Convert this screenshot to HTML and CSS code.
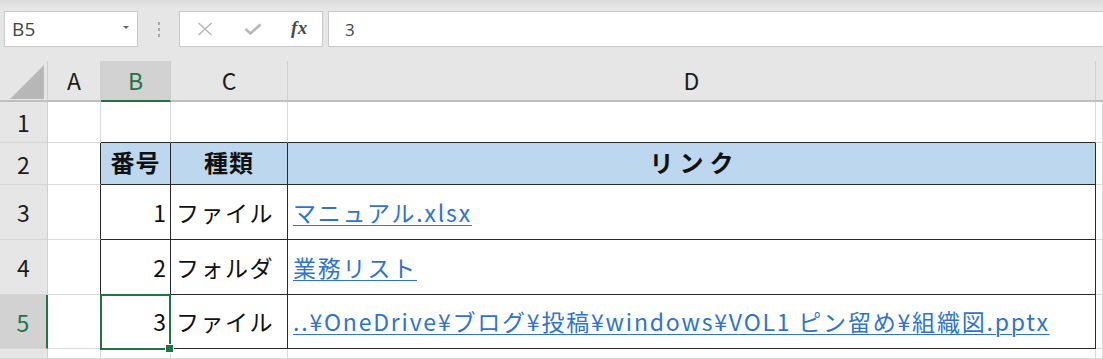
FILE: index.html
```html
<!DOCTYPE html>
<html lang="ja">
<head>
<meta charset="utf-8">
<title>Excel</title>
<link rel="stylesheet" href="styles.css">
</head>
<body>
<div class="formula-bar">
  <div class="name-box">
    <span class="name-text">B5</span>
    <span class="dropdown"></span>
  </div>
  <div class="grip"><span></span><span></span><span></span></div>
  <div class="fx-buttons">
    <svg class="icon" width="16" height="14" viewBox="0 0 16 14"><path d="M1.5 1 L14.5 13 M14.5 1 L1.5 13" stroke="#b8b8b8" stroke-width="1.6" fill="none"/></svg>
    <svg class="icon" width="18" height="12" viewBox="0 0 18 12"><path d="M1.5 6 L6.5 10.5 L16.5 1.5" stroke="#b8b8b8" stroke-width="2.6" fill="none"/></svg>
    <span class="fx">fx</span>
  </div>
  <div class="formula-input">3</div>
</div>

<div class="sheet">
  <div class="corner"><span class="tri"></span></div>
  <div class="ch">A</div>
  <div class="ch ch-sel">B</div>
  <div class="ch">C</div>
  <div class="ch">D</div>
  <div class="ch ch-last"></div>

  <div class="rh">1</div>
  <div class="c"></div>
  <div class="c tb"></div>
  <div class="c tb"></div>
  <div class="c tb"></div>
  <div class="c"></div>

  <div class="rh">2</div>
  <div class="c lb"></div>
  <div class="c t head">番号</div>
  <div class="c t head">種類</div>
  <div class="c t head head-wide">リンク</div>
  <div class="c"></div>

  <div class="rh">3</div>
  <div class="c lb"></div>
  <div class="c t num">1</div>
  <div class="c t txt">ファイル</div>
  <div class="c t txt"><a class="link" href="#">マニュアル.xlsx</a></div>
  <div class="c"></div>

  <div class="rh">4</div>
  <div class="c lb"></div>
  <div class="c t num">2</div>
  <div class="c t txt">フォルダ</div>
  <div class="c t txt"><a class="link" href="#">業務リスト</a></div>
  <div class="c"></div>

  <div class="rh rh-sel">5</div>
  <div class="c lb"></div>
  <div class="c t num active">3</div>
  <div class="c t txt">ファイル</div>
  <div class="c t txt"><a class="link" href="#">..¥OneDrive¥ブログ¥投稿¥windows¥VOL1 ピン留め¥組織図.pptx</a></div>
  <div class="c"></div>

  <div class="rh"></div>
  <div class="c"></div>
  <div class="c"></div>
  <div class="c"></div>
  <div class="c"></div>
  <div class="c"></div>
</div>
</body>
</html>
```

FILE: styles.css
```css
* { box-sizing: border-box; }

html, body {
  margin: 0;
  padding: 0;
  width: 1103px;
  height: 359px;
  overflow: hidden;
  background: #e6e6e6;
  font-family: "Noto Sans CJK JP", "Noto Sans", sans-serif;
}

/* ---------- formula bar ---------- */
.formula-bar {
  height: 61px;
  display: flex;
  align-items: flex-start;
  padding: 11px 0 0 4px;
  background: linear-gradient(#dcdcdc 0px, #e6e6e6 7px);
}

.name-box {
  width: 134px;
  height: 36px;
  background: #fff;
  border: 1px solid #c9c9c9;
  display: flex;
  align-items: center;
  justify-content: space-between;
  padding: 0 8px 0 7px;
}

.name-text {
  font-family: "Open Sans", "Noto Sans", sans-serif;
  font-size: 19px;
  color: #444;
  letter-spacing: 0.2px;
}

.dropdown {
  width: 0;
  height: 0;
  border-left: 3px solid transparent;
  border-right: 3px solid transparent;
  border-top: 3px solid #666;
  margin-bottom: 4px;
}

.grip {
  width: 41px;
  height: 36px;
  display: flex;
  flex-direction: column;
  align-items: center;
  justify-content: center;
  gap: 3px;
}

.grip span {
  width: 2px;
  height: 3px;
  background: #a8a8a8;
}

.fx-buttons {
  width: 144px;
  height: 36px;
  background: #fff;
  border: 1px solid #c9c9c9;
  display: flex;
  align-items: center;
  padding-left: 17px;
}

.fx-buttons .icon:first-child { margin-right: 31px; }
.fx-buttons .icon:nth-child(2) { margin-right: 29px; }

.fx {
  font-family: "Liberation Serif", "DejaVu Serif", serif;
  font-style: italic;
  font-weight: bold;
  font-size: 19px;
  color: #4a4a4a;
  letter-spacing: 0.5px;
  margin-top: -3px;
}

.formula-input {
  flex: 1;
  height: 36px;
  margin-left: 5px;
  margin-right: -4px;
  background: #fff;
  border: 1px solid #c9c9c9;
  display: flex;
  align-items: center;
  padding-left: 16px;
  font-family: "Open Sans", "Noto Sans", sans-serif;
  font-size: 17px;
  color: #444;
}

/* ---------- sheet grid ---------- */
.sheet {
  display: grid;
  grid-template-columns: 48px 53px 70px 117px 808px 1fr;
  grid-template-rows: 41px 41px 42px 55px 55px 54px 1fr;
  height: 298px;
  background: #fff;
}

.corner {
  background: #e6e6e6;
  border-right: 1px solid #cfcfcf;
  border-bottom: 2px solid #bfbfbf;
  display: flex;
  align-items: flex-end;
  justify-content: flex-end;
  padding: 0 3px 1px 0;
}

.tri {
  width: 0;
  height: 0;
  border-left: 34px solid transparent;
  border-bottom: 34px solid #b7b7b7;
}

.ch {
  background: #e6e6e6;
  border-right: 1px solid #cfcfcf;
  border-bottom: 2px solid #bfbfbf;
  display: flex;
  align-items: center;
  justify-content: center;
  font-size: 23px;
  color: #1c1c1c;
  padding-bottom: 1px;
}

.ch-last { border-right: none; }

.ch-sel {
  background: #d2d2d2;
  color: #217346;
  border-bottom-color: #217346;
}

.rh {
  background: #e6e6e6;
  border-right: 1px solid #cfcfcf;
  border-bottom: 1px solid #d6d6d6;
  display: flex;
  align-items: center;
  justify-content: center;
  font-size: 23px;
  color: #1c1c1c;
}

.rh-sel {
  background: #d2d2d2;
  color: #217346;
  border-right: 2px solid #217346;
}

.c {
  border-right: 1px solid #d9d9d9;
  border-bottom: 1px solid #d9d9d9;
  font-size: 23px;
  line-height: 23px;
  color: #111;
  display: flex;
  align-items: center;
  white-space: nowrap;
  overflow: visible;
}

.tb { border-bottom-color: #2a2a2a; }
.lb { border-right-color: #2a2a2a; }

.t {
  border-right: 1px solid #2a2a2a;
  border-bottom: 1px solid #2a2a2a;
}

.head {
  background: #bdd7ee;
  font-weight: bold;
  font-size: 24px;
  letter-spacing: 1px;
  justify-content: center;
  padding-bottom: 5px;
}

.head-wide {
  letter-spacing: 6px;
  padding-left: 6px;
}

.num {
  justify-content: flex-end;
  padding-right: 4px;
}

.txt {
  padding-left: 5px;
  letter-spacing: 1.5px;
}

.link {
  color: #2f74cc;
  text-decoration: underline;
  text-decoration-thickness: 1px;
  text-underline-offset: 3px;
  letter-spacing: 1.8px;
}

.active { position: relative; }

.active::before {
  content: "";
  position: absolute;
  top: -1px;
  left: -1px;
  right: -1px;
  bottom: -2px;
  border: 2px solid #217346;
  pointer-events: none;
}

.active::after {
  content: "";
  position: absolute;
  right: -4px;
  bottom: -5px;
  width: 7px;
  height: 7px;
  background: #217346;
  border: 1px solid #fff;
}
```
